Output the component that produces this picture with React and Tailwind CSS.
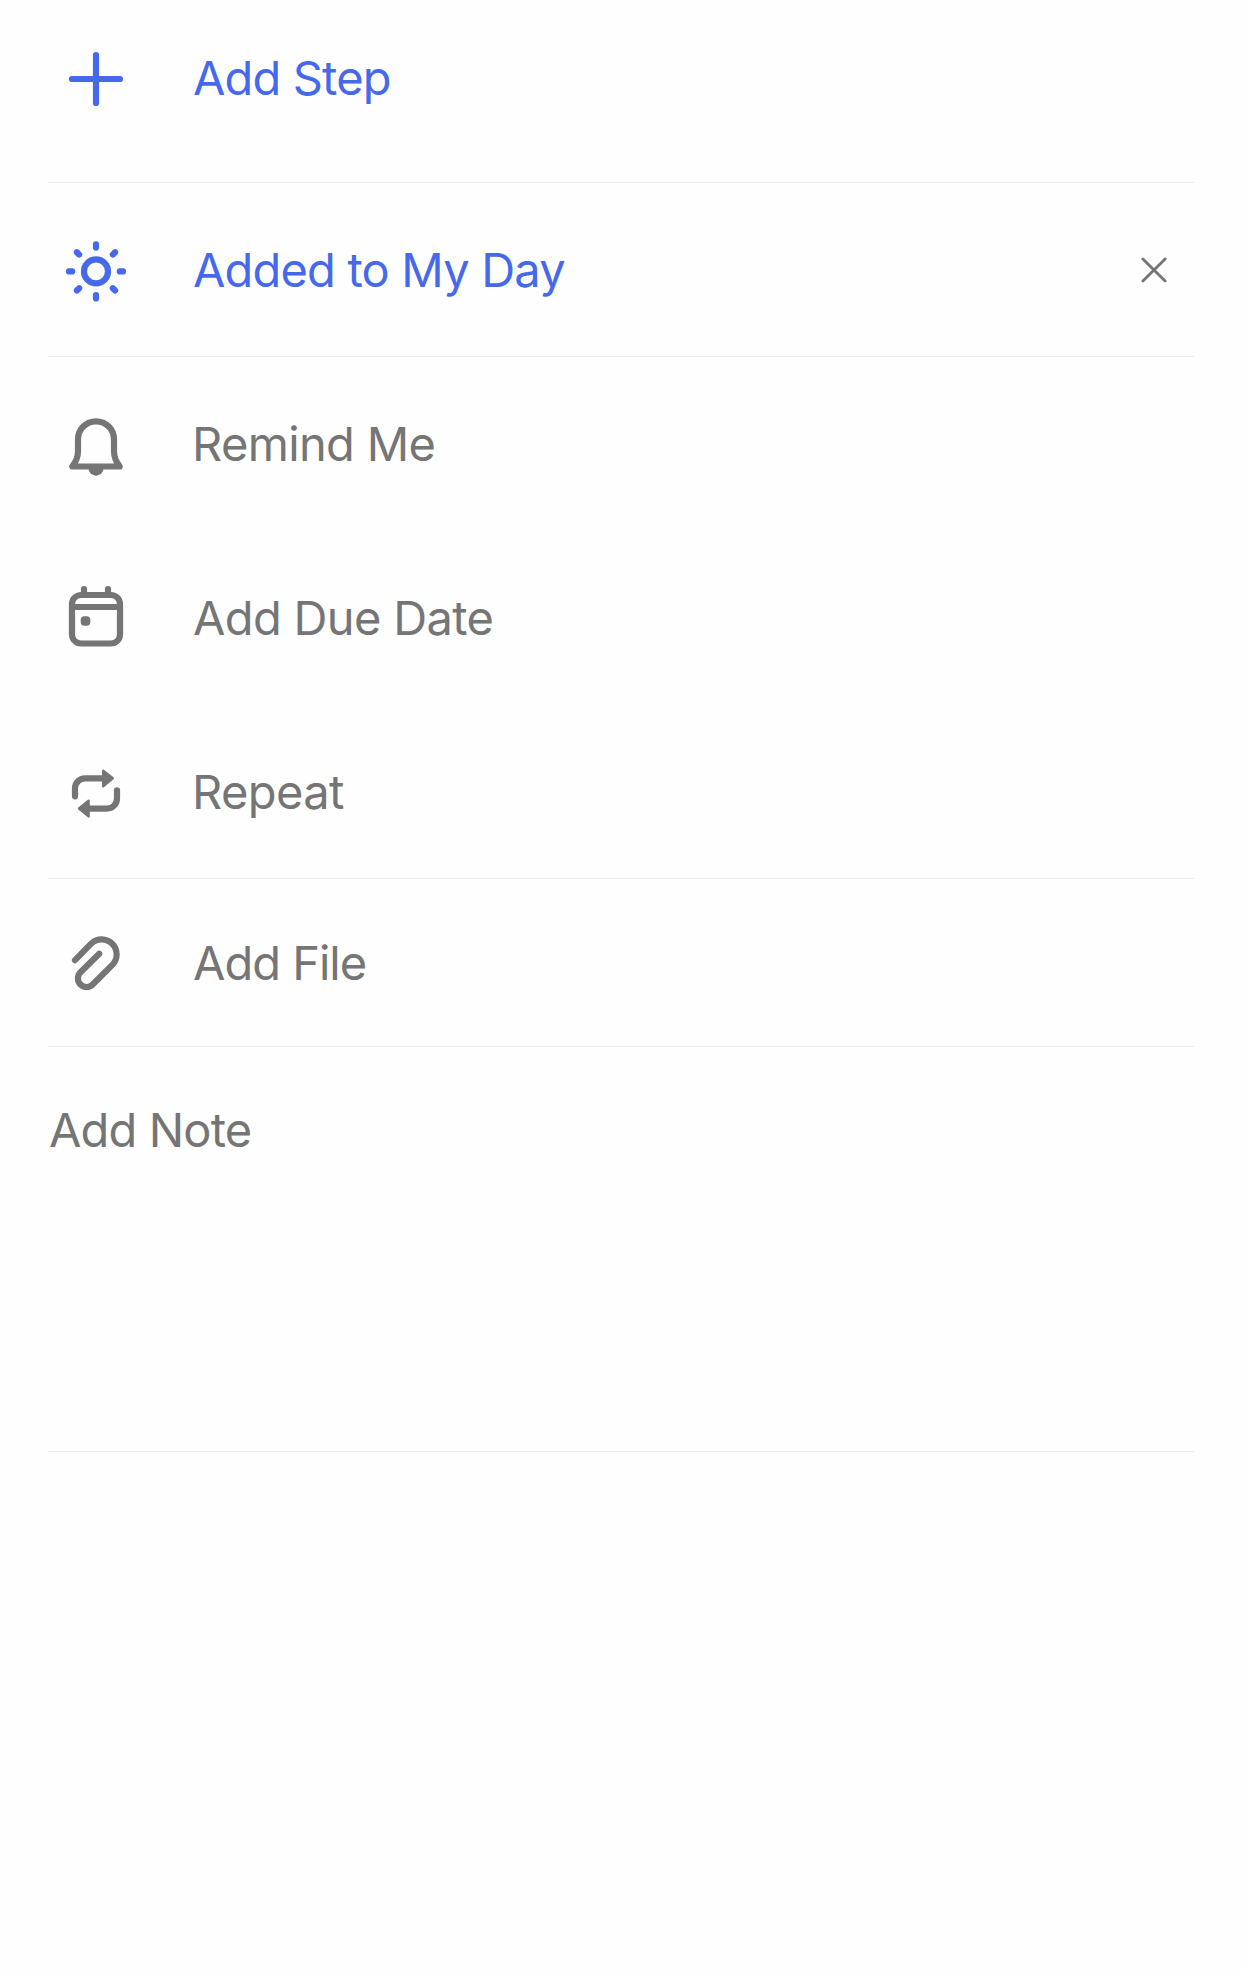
const stroke = {
  fill: "none",
  stroke: "currentColor",
  strokeWidth: 6.2,
  strokeLinecap: "round",
  strokeLinejoin: "round",
};

function Icon({ children, className = "mt-[3px]" }) {
  return (
    <svg viewBox="0 0 72 72" className={`size-[72px] shrink-0 ${className}`} {...stroke}>
      {children}
    </svg>
  );
}

const PlusIcon = () => (
  <Icon>
    <path d="M36 12v48M12 36h48" />
  </Icon>
);

const SunIcon = () => (
  <Icon>
    <circle cx="36" cy="36.4" r="12" />
    {[0, 45, 90, 135, 180, 225, 270, 315].map((a) => (
      <path key={a} d="M36 9.4v3.2" transform={`rotate(${a} 36 36.4)`} />
    ))}
  </Icon>
);

const BellIcon = () => (
  <Icon className="mt-[2px]">
    <path d="M36 12.3c-10 0-18 8-18 18v12c0 6-2 10.5-5.7 15.2h47.4C56 52.8 54 48.3 54 42.3v-12c0-10-8-18-18-18z" />
    <path d="M28.5 59.5a7.5 7.2 0 0 0 15 0z" fill="currentColor" stroke="none" />
  </Icon>
);

const CalendarIcon = () => (
  <Icon className="mt-[2px]">
    <rect x="12" y="12" width="48" height="48.5" rx="9" />
    <path d="M12 24h48M24 6v6M48 6v6" />
    <rect x="20.7" y="33.3" width="9.6" height="9.4" rx="3.6" fill="currentColor" stroke="none" />
  </Icon>
);

const RepeatIcon = () => (
  <Icon>
    <path d="M15 39.3V31.3a10 10 0 0 1 10-10h19M57 33.3v8.3a10 10 0 0 1-10 10H28" />
    <path
      d="M43.2 13.6l9.6 7.7-9.6 7.9zM28.6 43.7L19 51.5l9.6 7.9z"
      fill="currentColor"
      strokeWidth="2.4"
    />
  </Icon>
);

const ClipIcon = () => (
  <Icon className="mt-px">
    <path d="M15 33.2L31.4 16.4A15 15 0 0 1 52.6 37.6L32.7 57.5A8.6 8.6 0 0 1 20.5 45.3L39.2 26.7" />
  </Icon>
);

function Row({ icon, label, className, textClass, onClose }) {
  return (
    <div className={`flex items-center pl-3 ${className}`}>
      {icon}
      <span className={`leading-[60px] whitespace-nowrap ${textClass}`}>{label}</span>
      {onClose && (
        <button aria-label="Remove from My Day" className="mr-[27.5px] ml-auto text-[#757576]">
          <svg viewBox="0 0 26 26" className="size-[26px]" {...stroke} strokeWidth="2.8">
            <path d="M1.9 1.9l22.2 22.2M24.1 1.9L1.9 24.1" />
          </svg>
        </button>
      )}
    </div>
  );
}

export default function App() {
  return (
    <main className="h-[1971px] w-[1242px] overflow-hidden bg-[#fefefe] px-12 font-['Inter',sans-serif] text-[47px] text-[#757576]">
      <div className="w-[1146px]">
        <section className="h-[183px] border-b border-[#ebebeb] text-[#4669eb]">
          <Row icon={<PlusIcon />} label="Add Step" className="h-[155px]" textClass="ml-[61px] tracking-[-0.85px]" />
        </section>
        <section className="border-b border-[#ebebeb] text-[#4669eb]">
          <Row icon={<SunIcon />} label="Added to My Day" className="h-[173px]" textClass="ml-[61px] tracking-[-0.82px]" onClose />
        </section>
        <section className="border-b border-[#ebebeb]">
          <Row icon={<BellIcon />} label="Remind Me" className="h-[174px]" textClass="ml-[60px] tracking-[-0.65px]" />
          <Row icon={<CalendarIcon />} label="Add Due Date" className="h-[174px]" textClass="ml-[61px] tracking-[-0.65px]" />
          <Row icon={<RepeatIcon />} label="Repeat" className="h-[173px]" textClass="ml-[60px] tracking-[-0.6px]" />
        </section>
        <section className="border-b border-[#ebebeb]">
          <Row icon={<ClipIcon />} label="Add File" className="h-[167px]" textClass="ml-[61px] tracking-[-1px]" />
        </section>
        <section className="h-[405px] border-b border-[#ebebeb] pt-[53px] pl-px">
          <p className="leading-[60px] tracking-[-0.85px]">Add Note</p>
        </section>
      </div>
    </main>
  );
}
